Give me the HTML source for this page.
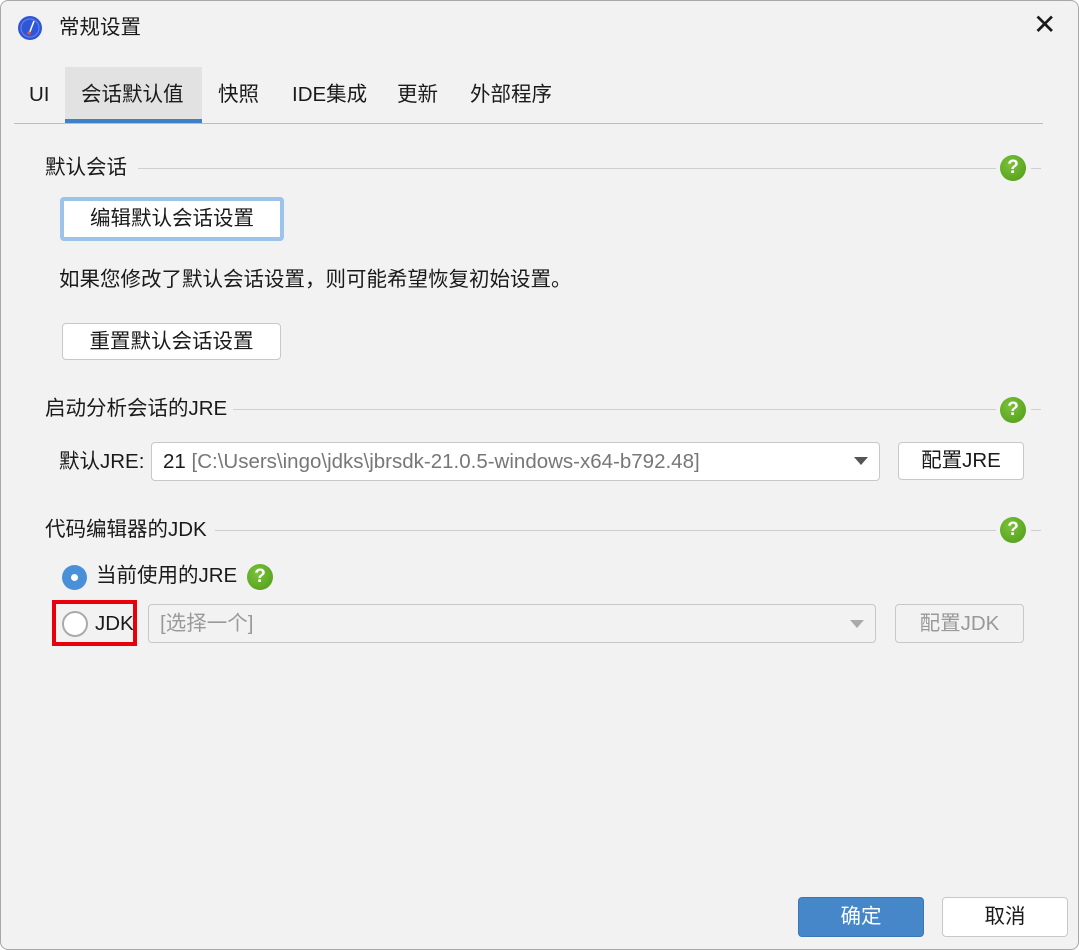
<!DOCTYPE html>
<html><head><meta charset="utf-8"><style>
*{box-sizing:border-box;margin:0;padding:0}
body{width:1079px;height:950px;background:#fff;font-family:"Liberation Sans","Noto Sans CJK SC",sans-serif;font-size:20.5px;color:#1a1a1a;position:relative;overflow:hidden}
.win{position:absolute;left:0;top:0;width:1079px;height:950px;background:#f2f2f2;border:1px solid #a8a8a8;border-radius:8px}
.a{position:absolute;white-space:nowrap;line-height:24px}
.btn{position:absolute;background:#fff;border:1px solid #c8c8c8;border-radius:4px;text-align:center}
.line{position:absolute;height:1px;background:#cfcfcf}
.q{position:absolute;width:26px;height:26px;border-radius:50%;background:radial-gradient(circle at 40% 35%,#7cc23a,#4d9a17);color:#fff;font-weight:bold;font-size:19px;text-align:center;line-height:26px}
</style></head><body><div class="win">
<svg class="a" style="left:16px;top:14px" width="26" height="26" viewBox="0 0 26 26"><circle cx="13" cy="13" r="12" fill="#2f56d6"/><circle cx="13" cy="13" r="9" fill="none" stroke="#6b86ea" stroke-width="1"/><line x1="12" y1="19" x2="17" y2="6" stroke="#fff" stroke-width="1.5"/><circle cx="12" cy="18" r="1.6" fill="#f05a28"/></svg>
<div class="a" style="left:58px;top:15px">常规设置</div>
<div class="a" style="left:1032px;top:12px;font-size:28px;font-weight:300">✕</div>
<div class="a" style="left:64px;top:66px;width:137px;height:55px;background:#e2e2e2"></div>
<div class="a" style="left:64px;top:118px;width:137px;height:4px;background:#3d82c6"></div>
<div class="line" style="left:13px;top:122px;width:1029px;background:#bdbdbd"></div>
<div class="a" style="left:28px;top:82px">UI</div>
<div class="a" style="left:80px;top:82px">会话默认值</div>
<div class="a" style="left:217px;top:82px">快照</div>
<div class="a" style="left:291px;top:82px">IDE集成</div>
<div class="a" style="left:396px;top:82px">更新</div>
<div class="a" style="left:469px;top:82px">外部程序</div>

<div class="a" style="left:44px;top:155px">默认会话</div>
<div class="line" style="left:137px;top:167px;width:858px"></div>
<div class="q" style="left:999px;top:154px">?</div>
<div class="line" style="left:1030px;top:167px;width:10px"></div>
<div class="btn" style="left:59px;top:196px;width:224px;height:44px;border:4px solid #9cc3ea;line-height:35px">编辑默认会话设置</div>
<div class="a" style="left:58px;top:267px">如果您修改了默认会话设置，则可能希望恢复初始设置。</div>
<div class="btn" style="left:61px;top:322px;width:219px;height:37px;line-height:35px">重置默认会话设置</div>

<div class="a" style="left:44px;top:396px">启动分析会话的JRE</div>
<div class="line" style="left:232px;top:408px;width:763px"></div>
<div class="q" style="left:999px;top:396px">?</div>
<div class="line" style="left:1030px;top:408px;width:10px"></div>
<div class="a" style="left:58px;top:449px">默认JRE:</div>
<div class="btn" style="left:150px;top:441px;width:729px;height:39px;text-align:left;padding-left:11px;line-height:37px">21 <span style="color:#777">[C:\Users\ingo\jdks\jbrsdk-21.0.5-windows-x64-b792.48]</span></div>
<div class="a" style="left:853px;top:456px;width:0;height:0;border-left:7px solid transparent;border-right:7px solid transparent;border-top:8px solid #555"></div>
<div class="btn" style="left:897px;top:441px;width:126px;height:38px;line-height:36px">配置JRE</div>

<div class="a" style="left:44px;top:517px">代码编辑器的JDK</div>
<div class="line" style="left:214px;top:529px;width:781px"></div>
<div class="q" style="left:999px;top:516px">?</div>
<div class="line" style="left:1030px;top:529px;width:10px"></div>
<div class="a" style="left:61px;top:564px;width:25px;height:25px;border-radius:50%;background:#4a90d9"></div>
<div class="a" style="left:70px;top:573px;width:7px;height:7px;border-radius:50%;background:#fff"></div>
<div class="a" style="left:95px;top:563px">当前使用的JRE</div>
<div class="q" style="left:246px;top:563px">?</div>
<div class="a" style="left:51px;top:599px;width:85px;height:46px;border:4px solid #e8000b"></div>
<div class="a" style="left:61px;top:610px;width:26px;height:26px;border-radius:50%;border:2px solid #aaa;background:#fff"></div>
<div class="a" style="left:94px;top:611px">JDK</div>
<div class="btn" style="left:147px;top:603px;width:728px;height:39px;text-align:left;padding-left:11px;line-height:37px;color:#9a9a9a;background:#f2f2f2">[选择一个]</div>
<div class="a" style="left:849px;top:619px;width:0;height:0;border-left:7px solid transparent;border-right:7px solid transparent;border-top:8px solid #aaa"></div>
<div class="btn" style="left:894px;top:603px;width:129px;height:39px;line-height:37px;color:#999;background:#f2f2f2">配置JDK</div>

<div class="a" style="left:797px;top:896px;width:126px;height:40px;background:#4587c8;border:1px solid #3a77b5;border-radius:4px;color:#fff;text-align:center;line-height:38px">确定</div>
<div class="btn" style="left:941px;top:896px;width:126px;height:40px;line-height:38px">取消</div>
</div></body></html>
